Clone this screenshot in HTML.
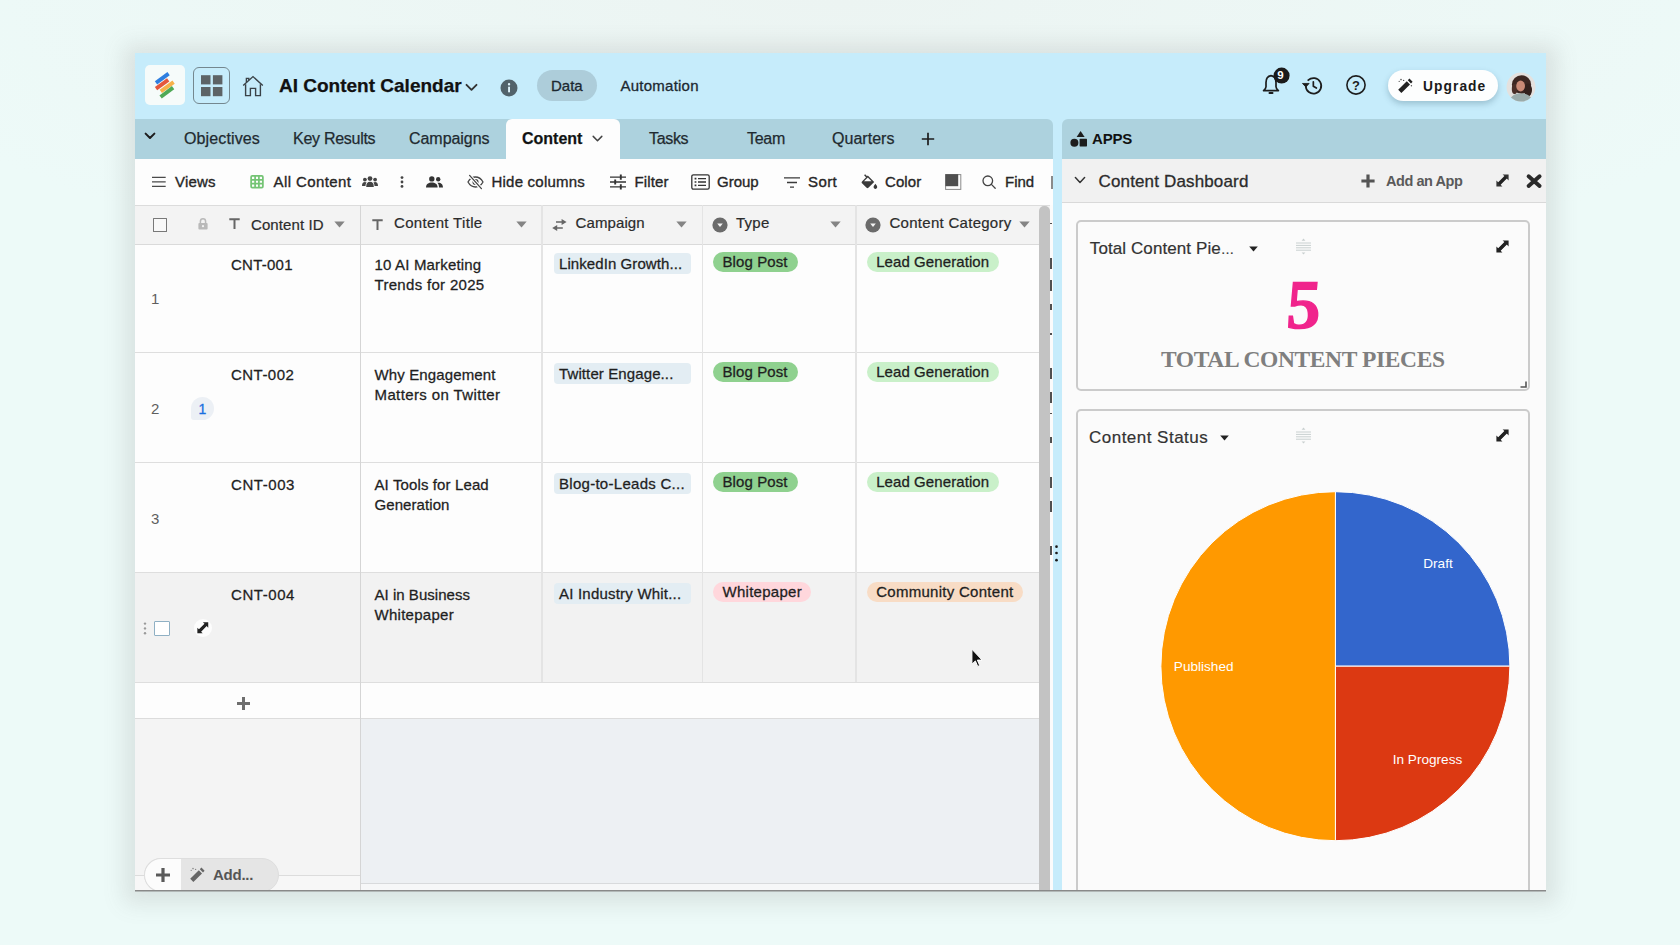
<!DOCTYPE html>
<html lang="en">
<head>
<meta charset="utf-8">
<title>AI Content Calendar</title>
<style>
*{box-sizing:border-box;margin:0;padding:0}
html,body{width:1680px;height:945px;overflow:hidden}
body{font-family:"Liberation Sans",sans-serif;color:#1f1f1f;background:#eefaf8;-webkit-font-smoothing:antialiased}
#stage{position:relative;width:1680px;height:945px;overflow:hidden;
 background:radial-gradient(ellipse 1000px 300px at 50% 0%,#ecf4f2 0%,rgba(237,250,248,0) 100%),#edfaf8}
.abs{position:absolute}
#win{position:absolute;left:135px;top:53px;width:1410.5px;height:837px;background:#c6ecfb;
 box-shadow:0 3px 20px 11px rgba(105,110,110,.15),0 1.5px 0 0 #8e8e8e}
#clip{position:absolute;left:0;top:0;width:1545.5px;height:890px;overflow:hidden}
#clip>*{position:absolute}
.t{position:absolute;white-space:nowrap;line-height:1}
svg{position:absolute;overflow:visible}
.tab{top:130.9px;font-size:16px;color:#1f2a30}
.tb{top:173.8px;font-size:15px;color:#262626;-webkit-text-stroke:.35px #262626}
.tab{-webkit-text-stroke:.25px #1f2a30}
.hd{top:216.5px;font-size:15px;color:#2b2b2b;-webkit-text-stroke:.2px #2b2b2b}
.cell{font-size:15px;color:#1f1f1f;-webkit-text-stroke:.28px #1f1f1f}
.ml{white-space:normal;line-height:20.5px}
.rn{font-size:15px;color:#5f5f5f}
.chip{position:absolute;height:24px;border-radius:4px;background:#e3edf3}
.tag{position:absolute;height:21px;border-radius:11px}
.hline{position:absolute;height:1.5px;background:#dedede}
.vline{position:absolute;width:1.5px;background:#e4e4e4}
.card{position:absolute;left:1076px;width:454px;border:2px solid #cbcbcb;border-radius:5px;background:#fbfbfb}
.ct{font-size:17px;color:#333;top:239px;-webkit-text-stroke:.2px #333}
.pl{font-size:13.6px;fill:#fff;font-family:"Liberation Sans",sans-serif}
</style>
</head>
<body>
<div id="stage">
<div id="win"></div>
<div id="clip">
<!--HEADER-->
<div id="logo" style="left:145px;top:65px;width:39.5px;height:40px;border-radius:5px;background:#f6fbfa"></div>
<svg style="left:145px;top:65px" width="40" height="40" viewBox="0 0 40 40">
 <g stroke-width="3.9" stroke-linecap="butt">
  <line x1="11" y1="17.9" x2="23.6" y2="8.6" stroke="#2f7fe0"/>
  <line x1="11" y1="23.6" x2="23.2" y2="14.9" stroke="#e4573d"/>
  <line x1="15.8" y1="26.4" x2="28.6" y2="17.2" stroke="#f6b14a"/>
  <line x1="15.6" y1="32" x2="28.1" y2="22.6" stroke="#4fa956"/>
 </g>
</svg>
<div id="gridbtn" style="left:193px;top:67px;width:37px;height:37px;border-radius:6px;border:1.5px solid #74878f"></div>
<svg style="left:193px;top:67px" width="37" height="37" viewBox="0 0 37 37" fill="#5d6366">
 <rect x="8" y="8.2" width="9.5" height="9.2"/><rect x="19.9" y="8.2" width="9.5" height="9.2"/>
 <rect x="8" y="20" width="9.5" height="9.2"/><rect x="19.9" y="20" width="9.5" height="9.2"/>
</svg>
<svg style="left:242px;top:75px" width="22" height="22" viewBox="0 0 22 22" fill="none" stroke="#3a4247" stroke-width="1.4" stroke-linejoin="miter">
 <path d="M1.2 10.6 L11 1.6 L20.8 10.6"/>
 <path d="M3.6 9.2 V20.6 H8.4 V13.4 H13.6 V20.6 H18.4 V9.2"/>
 <path d="M4.4 7.2 V3.4 H6.8 V5.2"/>
</svg>
<span class="t" id="title" style="left:279px;top:75.9px;font-size:19px;font-weight:700;color:#111;letter-spacing:0;-webkit-text-stroke:.25px #111">AI Content Calendar</span>
<svg style="left:465px;top:83px" width="13" height="9" viewBox="0 0 13 9" fill="none" stroke="#333" stroke-width="1.9" stroke-linecap="round" stroke-linejoin="round"><path d="M1.5 1.8 L6.5 6.8 L11.5 1.8"/></svg>
<svg style="left:499.8px;top:79px" width="18" height="18" viewBox="0 0 18 18"><circle cx="9" cy="9" r="8.5" fill="#52626a"/><rect x="8.1" y="7.7" width="1.9" height="5.6" fill="#dff3fb"/><circle cx="9.05" cy="5.2" r="1.2" fill="#dff3fb"/></svg>
<div id="datapill" style="left:537px;top:70px;width:60px;height:31px;border-radius:16px;background:#adcdda"></div>
<span class="t" style="left:551px;top:78px;font-size:15px;color:#1c2830;-webkit-text-stroke:.3px #1c2830">Data</span>
<span class="t" style="left:620.5px;top:78px;font-size:15px;color:#1c2830;letter-spacing:.24px;-webkit-text-stroke:.3px #1c2830">Automation</span>
<!-- bell -->
<svg style="left:1260px;top:72px" width="32" height="26" viewBox="0 0 32 26">
 <path d="M11 3.6 C7.6 4.2 6 7 6 10.4 V14.8 C6 16.4 5 17.4 3.6 18.6 H18.4 C17 17.4 16 16.4 16 14.8 V10.4 C16 7 14.4 4.2 11 3.6 Z" fill="none" stroke="#1d1d1d" stroke-width="1.7" stroke-linejoin="round"/>
 <path d="M9.4 21 H12.6" stroke="#1d1d1d" stroke-width="1.8" stroke-linecap="round"/>
 <circle cx="21.6" cy="3.6" r="8" fill="#1b1b1b"/>
</svg>
<span class="t" style="left:1277.2px;top:70px;font-size:11.5px;font-weight:700;color:#fff">9</span>
<!-- history -->
<svg style="left:1302px;top:75.5px" width="21.6" height="19.8" viewBox="0 0 24 22" fill="none" stroke="#1d1d1d" stroke-width="1.9" stroke-linecap="round" stroke-linejoin="round">
 <path d="M4.2 11 A8.6 8.6 0 1 0 6.9 4.7"/>
 <path d="M12.6 6.4 V11.4 L16 13.4"/>
 <path d="M0.8 8.6 L4.3 12.2 L7.6 8.6 Z" fill="#1d1d1d" stroke-width="1"/>
</svg>
<!-- help -->
<svg style="left:1345px;top:74.4px" width="22" height="22" viewBox="0 0 22 22"><circle cx="11" cy="11" r="9.1" fill="none" stroke="#1d1d1d" stroke-width="1.6"/></svg>
<span class="t" style="left:1352px;top:78.9px;font-size:13px;font-weight:700;color:#1d1d1d">?</span>
<!-- upgrade -->
<div id="upgrade" style="left:1388px;top:70px;width:110px;height:31px;border-radius:16px;background:#fdfefe;box-shadow:0 3px 6px rgba(40,80,100,.28)"></div>
<svg style="left:1397px;top:77px" width="17" height="17" viewBox="0 0 17 17">
 <path d="M1.2 12.8 L9.8 4.2 L13 7.4 L4.4 16 Z" fill="#222"/>
 <path d="M10.8 3.2 L12.4 1.6 L15.6 4.8 L14 6.4 Z" fill="#222"/>
 <circle cx="4" cy="2.6" r=".8" fill="#555"/><circle cx="6.6" cy="3.4" r=".7" fill="#555"/><circle cx="2.2" cy="4.4" r=".6" fill="#555"/><circle cx="14.4" cy="8.8" r=".7" fill="#555"/>
</svg>
<span class="t" id="upg" style="left:1423px;top:79.9px;font-size:13.8px;font-weight:700;color:#1b1b1b;letter-spacing:1.05px">Upgrade</span>
<!-- avatar -->
<svg style="left:1506px;top:72px" width="30" height="30" viewBox="0 0 30 30">
 <defs><clipPath id="avc"><circle cx="15" cy="15" r="14.5"/></clipPath></defs>
 <g clip-path="url(#avc)">
  <rect width="30" height="30" fill="#e4e1de"/>
  <ellipse cx="15.5" cy="12.5" rx="9.6" ry="9.2" fill="#3c2722"/>
  <ellipse cx="22" cy="18" rx="4" ry="6.5" fill="#33211d"/>
  <ellipse cx="8.6" cy="17" rx="2.8" ry="5" fill="#4a2f28"/>
  <ellipse cx="14.6" cy="14" rx="4.4" ry="5.4" fill="#c98a76"/>
  <path d="M3 30 C5 23 10 21.2 15 21.6 C21 21.2 25 23.4 27 30 Z" fill="#9aabaa"/>
 </g>
</svg>
<!--TABS-->
<div id="tabbar" style="left:135px;top:119px;width:917.7px;height:40px;background:#add2de;border-radius:0 6px 0 0"></div>
<div id="appsbar" style="left:1062px;top:119px;width:484px;height:40px;background:#add2de;border-radius:6px 0 0 0"></div>
<svg style="left:144px;top:132px" width="12" height="9" viewBox="0 0 12 9" fill="none" stroke="#1d1d1d" stroke-width="2" stroke-linecap="round" stroke-linejoin="round"><path d="M1.6 1.6 L6 6 L10.4 1.6"/></svg>
<span class="t tab" style="left:184px;letter-spacing:0.13px">Objectives</span>
<span class="t tab" style="left:293px;letter-spacing:-0.28px">Key Results</span>
<span class="t tab" style="left:409px;letter-spacing:-0.05px">Campaigns</span>
<div id="activetab" style="left:506px;top:119px;width:114px;height:41px;background:#fdfdfd;border-radius:6px 6px 0 0"></div>
<span class="t tab" style="left:522px;font-weight:700;color:#111">Content</span>
<svg style="left:592px;top:135px" width="11" height="8" viewBox="0 0 11 8" fill="none" stroke="#444" stroke-width="1.5" stroke-linecap="round" stroke-linejoin="round"><path d="M1.2 1.4 L5.5 5.7 L9.8 1.4"/></svg>
<span class="t tab" style="left:649px;letter-spacing:-0.33px">Tasks</span>
<span class="t tab" style="left:747px;letter-spacing:-0.28px">Team</span>
<span class="t tab" style="left:832px;letter-spacing:0.03px">Quarters</span>
<svg style="left:921px;top:132px" width="14" height="14" viewBox="0 0 14 14" stroke="#1d1d1d" stroke-width="1.7" stroke-linecap="butt"><path d="M7 .8 V13.2 M.8 7 H13.2"/></svg>
<svg style="left:1070px;top:130px" width="18" height="18" viewBox="0 0 18 18" fill="#1d1d1d"><path d="M10.6 1 L14.6 7 H6.6 Z"/><circle cx="4.4" cy="12.8" r="4"/><rect x="9.6" y="8.8" width="7.4" height="7.6" rx=".6"/></svg>
<span class="t" style="left:1092px;top:131.3px;font-size:15px;font-weight:700;color:#111;letter-spacing:-.2px">APPS</span>
<!--TOOLBAR-->
<div id="toolbar" style="left:135px;top:159px;width:917.7px;height:46px;background:#fdfdfd"></div>
<svg style="left:152px;top:176.1px" width="13.7" height="12" viewBox="0 0 13.7 12" stroke="#4a4a4a" stroke-width="1.3"><path d="M0 1.4 H13.7 M0 5.9 H13.7 M0 10.4 H13.7"/></svg>
<span class="t tb" style="left:175px;letter-spacing:0.2px">Views</span>
<svg style="left:250px;top:175px" width="14" height="13.6" viewBox="0 0 15 15" fill="none" stroke="#74c474" stroke-width="1.9"><rect x="1" y="1" width="13" height="13" rx="1.2"/><path d="M5.4 1 V14 M9.6 1 V14 M1 5.4 H14 M1 9.6 H14"/></svg>
<span class="t tb" style="left:273.5px;letter-spacing:0.4px">All Content</span>
<svg style="left:362px;top:176px" width="16" height="12" viewBox="0 0 16 12" fill="#444"><circle cx="8" cy="2.6" r="2.4"/><path d="M4.2 11 C4.2 7.4 5.6 5.8 8 5.8 C10.4 5.8 11.8 7.4 11.8 11 Z"/><circle cx="2.9" cy="3.6" r="1.9"/><path d="M0 10 C0 7.2 1 6 2.9 6 C3.6 6 4.2 6.2 4.6 6.6 C3.8 7.6 3.5 8.8 3.5 10 Z"/><circle cx="13.1" cy="3.6" r="1.9"/><path d="M16 10 C16 7.2 15 6 13.1 6 C12.4 6 11.8 6.2 11.4 6.6 C12.2 7.6 12.5 8.8 12.5 10 Z"/></svg>
<svg style="left:400.2px;top:176px" width="4" height="14" viewBox="0 0 4 14" fill="#444"><circle cx="2" cy="1.6" r="1.4"/><circle cx="2" cy="6" r="1.4"/><circle cx="2" cy="10.4" r="1.4"/></svg>
<svg style="left:426px;top:176px" width="17" height="12" viewBox="0 0 17 12" fill="#333"><circle cx="5.8" cy="2.9" r="2.7"/><path d="M0 11.6 C0 8 2.6 6.6 5.8 6.6 C9 6.6 11.6 8 11.6 11.6 Z"/><circle cx="12.2" cy="3.2" r="2.2"/><path d="M12.6 6.7 C15 6.8 17 8 17 11.6 H13 C13 9.6 12.6 8 11.4 6.8 Z"/></svg>
<svg style="left:467px;top:174px" width="17" height="16" viewBox="0 0 17 16" fill="none" stroke="#444" stroke-width="1.3" stroke-linecap="round"><path d="M1 8 C3 4.4 5.6 3 8.5 3 C11.4 3 14 4.4 16 8 C14 11.6 11.4 13 8.5 13 C5.6 13 3 11.6 1 8 Z"/><circle cx="8.5" cy="8" r="2.4"/><path d="M2.2 1.2 L14.6 15" stroke="#fdfdfd" stroke-width="3.4"/><path d="M2.6 1.4 L14.4 14.6"/></svg>
<span class="t tb" style="left:491.5px;letter-spacing:0.22px">Hide columns</span>
<svg style="left:610px;top:174px" width="16" height="16" viewBox="0 0 16 16" fill="none" stroke="#333" stroke-width="1.3"><path d="M0 3.2 H16 M0 8 H16 M0 12.8 H16"/><path d="M10.8 .6 V5.8 M5.2 5.4 V10.6 M10.8 10.2 V15.4" stroke-width="1.9"/></svg>
<span class="t tb" style="left:634.5px;letter-spacing:0.15px">Filter</span>
<svg style="left:691px;top:174px" width="19" height="16" viewBox="0 0 19 16" fill="none" stroke="#333" stroke-width="1.3"><rect x=".8" y=".8" width="17.4" height="14.4" rx="1.6"/><path d="M7 4.6 H15 M7 8 H15 M7 11.4 H15" stroke-width="1.4"/><path d="M3.6 4.6 H5.4 M3.6 8 H5.4 M3.6 11.4 H5.4" stroke-width="1.6"/></svg>
<span class="t tb" style="left:717px">Group</span>
<svg style="left:784px;top:176.5px" width="16" height="11" viewBox="0 0 16 11" stroke="#3a3a3a" stroke-width="1.4" fill="none"><path d="M0 .9 H16 M3 5.5 H13 M6 10.1 H10"/></svg>
<span class="t tb" style="left:808px;letter-spacing:0.4px">Sort</span>
<svg style="left:861px;top:174px" width="17" height="16" viewBox="0 0 17 16" fill="#3a3a3a"><path d="M6.8 1.6 L13.2 8 L7.4 13.8 C6.9 14.3 6.1 14.3 5.6 13.8 L1 9.2 C.5 8.7 .5 7.9 1 7.4 Z"/><path d="M3.6 .8 L8 5.2" stroke="#3a3a3a" stroke-width="1.5" fill="none"/><path d="M6.8 3.4 L3 7.2 H10.6 Z" fill="#fdfdfd"/><path d="M14.4 9.8 C15.4 11.2 16.2 12.2 16.2 13.1 C16.2 14.1 15.4 14.9 14.4 14.9 C13.4 14.9 12.6 14.1 12.6 13.1 C12.6 12.2 13.4 11.2 14.4 9.8 Z"/></svg>
<span class="t tb" style="left:885px;letter-spacing:0.1px">Color</span>
<svg style="left:945px;top:174px" width="17" height="16" viewBox="0 0 17 16"><rect x=".6" y=".6" width="15.2" height="14.8" fill="#fdfdfd" stroke="#8a8a8a" stroke-width="1"/><rect x=".4" y=".2" width="12.8" height="12" fill="#4f4f4f"/></svg>
<svg style="left:982px;top:175px" width="14" height="14" viewBox="0 0 14 14" fill="none" stroke="#444" stroke-width="1.3" stroke-linecap="round"><circle cx="5.8" cy="5.8" r="4.8"/><path d="M9.4 9.4 L13.2 13.2"/></svg>
<span class="t tb" style="left:1005px">Find</span>
<div style="left:1051px;top:176px;width:1.7px;height:12.7px;background:#8a8a8a"></div>
<!--GRID-->
<div id="gridbg" style="left:135px;top:205px;width:917.7px;height:685px;background:#fdfdfd"></div>
<div id="colhead" style="left:135px;top:205px;width:917.7px;height:39px;background:#f3f3f3"></div>
<div id="hoverrow" style="left:135px;top:572px;width:904px;height:110px;background:#f2f2f2"></div>
<div id="emptyleft" style="left:135px;top:719px;width:226px;height:156px;background:#f4f4f4"></div>
<div id="leftfoot" style="left:135px;top:875px;width:226px;height:16px;background:#f7f7f7"></div>
<div id="emptyright" style="left:361px;top:719px;width:691px;height:164px;background:#edf0f3"></div>
<div id="hscroll" style="left:361px;top:883px;width:691px;height:8px;background:#f6f7f8"></div>
<div class="hline" style="left:135px;top:204.5px;width:917.7px;background:#dcdcdc"></div>
<div class="hline" style="left:135px;top:243.5px;width:917.7px;background:#dadada"></div>
<div class="hline" style="left:135px;top:351.5px;width:904px"></div>
<div class="hline" style="left:135px;top:461.5px;width:904px"></div>
<div class="hline" style="left:135px;top:571.5px;width:904px"></div>
<div class="hline" style="left:135px;top:681.5px;width:904px"></div>
<div class="hline" style="left:135px;top:717.5px;width:917.7px;background:#dcdcdc"></div>
<div class="hline" style="left:135px;top:874.5px;width:226px;height:1px;background:#dcdcdc"></div>
<div class="hline" style="left:361px;top:882.5px;width:691px;height:1px;background:#d8dadc"></div>
<div class="vline" style="left:359.7px;top:205px;height:685px;width:1.8px;background:#d5d5d5"></div>
<div class="vline" style="left:541px;top:205px;height:477px"></div>
<div class="vline" style="left:701.5px;top:205px;height:477px"></div>
<div class="vline" style="left:855px;top:205px;height:477px"></div>
<!-- column header -->
<div style="left:153px;top:218px;width:14px;height:14px;border:1px solid #787878;border-radius:.5px;background:#f8f8f8"></div>
<svg style="left:198px;top:218px" width="10" height="12" viewBox="0 0 10 12"><rect x=".4" y="5" width="9.2" height="6.6" rx="1" fill="#b9b9b9"/><circle cx="5" cy="8.2" r="1.1" fill="#f3f3f3"/><path d="M2.4 5 V3.4 A2.6 2.6 0 0 1 7.6 3.4 V5" fill="none" stroke="#b9b9b9" stroke-width="1.5"/></svg>
<svg style="left:229px;top:218px" width="11" height="11" viewBox="0 0 11 11" fill="#666"><path d="M.3 .3 H10.7 V2.2 H6.5 V10.9 H4.5 V2.2 H.3 Z"/></svg>
<span class="t hd" style="left:251px;top:216.5px;letter-spacing:0.1px">Content ID</span>
<svg class="tri" style="left:334px;top:221px" width="11" height="7" viewBox="0 0 11 7" fill="#848484"><path d="M.3 .5 H10.7 L5.5 6.4 Z"/></svg>
<svg style="left:372px;top:219px" width="11" height="11" viewBox="0 0 11 11" fill="#666"><path d="M.3 .3 H10.7 V2.2 H6.5 V10.9 H4.5 V2.2 H.3 Z"/></svg>
<span class="t hd" style="left:394px;top:214.5px;letter-spacing:0.33px">Content Title</span>
<svg class="tri" style="left:516px;top:221px" width="11" height="7" viewBox="0 0 11 7" fill="#848484"><path d="M.3 .5 H10.7 L5.5 6.4 Z"/></svg>
<svg style="left:552px;top:218.6px" width="15" height="12" viewBox="0 0 15 12" fill="#666"><path d="M9.6 0 L14.6 3 L9.6 6 V3.8 H4 V2.2 H9.6 Z"/><path d="M5.2 6 L.2 9 L5.2 12 V9.8 H10.8 V8.2 H5.2 Z"/></svg>
<span class="t hd" style="left:575.5px;top:214.5px;letter-spacing:0.11px">Campaign</span>
<svg class="tri" style="left:676px;top:221px" width="11" height="7" viewBox="0 0 11 7" fill="#848484"><path d="M.3 .5 H10.7 L5.5 6.4 Z"/></svg>
<svg style="left:712px;top:217px" width="16" height="16" viewBox="0 0 16 16"><circle cx="8" cy="8" r="7.6" fill="#6b6b6b"/><path d="M5.2 6.6 H10.8 L8 9.9 Z" fill="#f3f3f3"/></svg>
<span class="t hd" style="left:736px;top:214.5px;letter-spacing:0.24px">Type</span>
<svg class="tri" style="left:829.5px;top:221px" width="11" height="7" viewBox="0 0 11 7" fill="#848484"><path d="M.3 .5 H10.7 L5.5 6.4 Z"/></svg>
<svg style="left:865px;top:217px" width="16" height="16" viewBox="0 0 16 16"><circle cx="8" cy="8" r="7.6" fill="#6b6b6b"/><path d="M5.2 6.6 H10.8 L8 9.9 Z" fill="#f3f3f3"/></svg>
<span class="t hd" style="left:889.5px;top:214.5px;letter-spacing:0.28px">Content Category</span>
<svg class="tri" style="left:1019px;top:221px" width="11" height="7" viewBox="0 0 11 7" fill="#848484"><path d="M.3 .5 H10.7 L5.5 6.4 Z"/></svg>
<!-- row 1 -->
<span class="t rn" style="left:151px;top:291.0px">1</span>
<span class="t cell" style="left:231px;top:256.8px;letter-spacing:0.25px">CNT-001</span>
<span class="t cell" style="left:374.5px;top:256.8px;letter-spacing:0.17px">10 AI Marketing</span>
<span class="t cell" style="left:374.5px;top:277.1px;letter-spacing:0.31px">Trends for 2025</span>
<div class="chip" style="left:554px;top:253.29999999999998px;width:137px;height:21px"></div>
<span class="t cell" style="left:559px;top:256.1px;letter-spacing:0.08px">LinkedIn Growth...</span>
<div class="tag" style="left:712.7px;top:251.7px;width:85px;height:20px;background:#8fd18f"></div>
<span class="t cell" style="left:722.5px;top:254.0px;letter-spacing:0.09px">Blog Post</span>
<div class="tag" style="left:866.5px;top:251.7px;width:132px;height:20px;background:#c9f0c9"></div>
<span class="t cell" style="left:876.2px;top:254.0px;letter-spacing:0.08px">Lead Generation</span>
<!-- row 2 -->
<span class="t rn" style="left:151px;top:401.0px">2</span>
<div style="left:191px;top:397px;width:23px;height:23px;border-radius:11.5px 11.5px 11.5px 3px;background:#ecf0f5"></div>
<span class="t" style="left:198.5px;top:401.5px;font-size:14px;color:#1a6fe0;-webkit-text-stroke:.3px #1a6fe0">1</span>
<span class="t cell" style="left:231px;top:366.8px;letter-spacing:0.46px">CNT-002</span>
<span class="t cell" style="left:374.5px;top:366.8px;letter-spacing:0.13px">Why Engagement</span>
<span class="t cell" style="left:374.5px;top:387.1px;letter-spacing:0.39px">Matters on Twitter</span>
<div class="chip" style="left:554px;top:363.3px;width:137px;height:21px"></div>
<span class="t cell" style="left:559px;top:366.1px;letter-spacing:0.11px">Twitter Engage...</span>
<div class="tag" style="left:712.7px;top:361.7px;width:85px;height:20px;background:#8fd18f"></div>
<span class="t cell" style="left:722.5px;top:364.0px;letter-spacing:0.09px">Blog Post</span>
<div class="tag" style="left:866.5px;top:361.7px;width:132px;height:20px;background:#c9f0c9"></div>
<span class="t cell" style="left:876.2px;top:364.0px;letter-spacing:0.08px">Lead Generation</span>
<!-- row 3 -->
<span class="t rn" style="left:151px;top:511.0px">3</span>
<span class="t cell" style="left:231px;top:476.8px;letter-spacing:0.57px">CNT-003</span>
<span class="t cell" style="left:374.5px;top:476.8px;letter-spacing:0.12px">AI Tools for Lead</span>
<span class="t cell" style="left:374.5px;top:497.1px;letter-spacing:0.08px">Generation</span>
<div class="chip" style="left:554px;top:473.3px;width:137px;height:21px"></div>
<span class="t cell" style="left:559px;top:476.1px;letter-spacing:0.28px">Blog-to-Leads C...</span>
<div class="tag" style="left:712.7px;top:471.7px;width:85px;height:20px;background:#8fd18f"></div>
<span class="t cell" style="left:722.5px;top:474.0px;letter-spacing:0.09px">Blog Post</span>
<div class="tag" style="left:866.5px;top:471.7px;width:132px;height:20px;background:#c9f0c9"></div>
<span class="t cell" style="left:876.2px;top:474.0px;letter-spacing:0.08px">Lead Generation</span>
<!-- row 4 -->
<span class="t cell" style="left:231px;top:586.8px;letter-spacing:0.57px">CNT-004</span>
<span class="t cell" style="left:374.5px;top:586.8px;letter-spacing:0.03px">AI in Business</span>
<span class="t cell" style="left:374.5px;top:607.0999999999999px;letter-spacing:0.28px">Whitepaper</span>
<div class="chip" style="left:554px;top:583.3000000000001px;width:137px;height:21px"></div>
<span class="t cell" style="left:559px;top:586.1px;letter-spacing:0.21px">AI Industry Whit...</span>
<div class="tag" style="left:712.7px;top:581.7px;width:98px;height:20px;background:#ffd7dc"></div>
<span class="t cell" style="left:722.5px;top:584.0px;letter-spacing:0.28px">Whitepaper</span>
<div class="tag" style="left:866.5px;top:581.7px;width:156.6px;height:20px;background:#f8dcc5"></div>
<span class="t cell" style="left:876.2px;top:584.0px;letter-spacing:0.28px">Community Content</span>
<!-- row 4 controls -->
<svg style="left:143px;top:622px" width="4" height="13" viewBox="0 0 4 13" fill="#9a9a9a"><circle cx="2" cy="1.6" r="1.2"/><circle cx="2" cy="6.4" r="1.2"/><circle cx="2" cy="11.2" r="1.2"/></svg>
<div style="left:154px;top:620.5px;width:16px;height:15.5px;border:1.2px solid #8fb0c4;border-radius:1px;background:#fff"></div>
<div style="left:193.5px;top:619px;width:18px;height:18px;border-radius:9px;background:#fdfdfd"></div>
<svg style="left:196.7px;top:622.3px" width="11.6" height="11.6" viewBox="0 0 13 13" fill="#222"><path d="M6.6 .4 H12.6 V6.4 L10.8 4.6 L4.6 10.8 L6.4 12.6 H.4 V6.4 L2.2 8.2 L8.4 2 Z"/><path d="M3 10 L10 3" stroke="#222" stroke-width="2.5" fill="none"/></svg>
<!-- add row -->
<svg style="left:237px;top:697px" width="13" height="13" viewBox="0 0 13 13" stroke="#6e6e6e" stroke-width="3"><path d="M6.5 0 V13 M0 6.5 H13"/></svg>
<!-- scrollbar -->
<div id="vscroll" style="left:1039px;top:206px;width:10.5px;height:690px;border-radius:5px;background:#c3c3c3"></div>
<!-- clipped next-column slivers -->
<div id="sliver" style="left:1049.5px;top:205px;width:3.2px;height:685px;background:#fbfbfb"></div>
<div style="left:1050.2px;top:222.5px;width:1.4px;height:1.5px;background:#505050"></div>
<div style="left:1050.2px;top:258px;width:1.4px;height:11px;background:#505050"></div>
<div style="left:1050.2px;top:280px;width:1.4px;height:11px;background:#505050"></div>
<div style="left:1050.2px;top:304px;width:1.4px;height:6px;background:#505050"></div>
<div style="left:1050.2px;top:333px;width:1.4px;height:1.8px;background:#505050"></div>
<div style="left:1050.2px;top:368px;width:1.4px;height:11px;background:#505050"></div>
<div style="left:1050.2px;top:392px;width:1.4px;height:11px;background:#505050"></div>
<div style="left:1050.2px;top:412.5px;width:1.4px;height:1.5px;background:#505050"></div>
<div style="left:1050.2px;top:437px;width:1.4px;height:6px;background:#505050"></div>
<div style="left:1050.2px;top:477px;width:1.4px;height:11px;background:#505050"></div>
<div style="left:1050.2px;top:501px;width:1.4px;height:11px;background:#505050"></div>
<div style="left:1050.2px;top:546px;width:1.4px;height:9px;background:#505050"></div>
<!-- panel resize dots -->
<svg style="left:1055.4px;top:545px" width="3" height="17" viewBox="0 0 3 17" fill="#1a1a1a"><circle cx="1.5" cy="1.7" r="1.35"/><circle cx="1.5" cy="8" r="1.35"/><circle cx="1.5" cy="15.2" r="1.35"/></svg>
<!-- mouse cursor -->
<svg id="cursor" style="left:970.6px;top:648.2px" width="12" height="20" viewBox="-1 -1 13.2 21.4"><path d="M0 0 L0 16.5 L3.8 12.9 L6.4 19 L8.6 18 L6 12 L11.2 12 Z" fill="#111" stroke="#fff" stroke-width="1.1" stroke-linejoin="round"/></svg>
<!-- add pill -->
<div style="left:144px;top:858px;width:135px;height:34px;border-radius:17px;background:#e5e5e5;border:1px solid #dedede"></div>
<div style="left:144px;top:858px;width:37px;height:34px;border-radius:17px 0 0 17px;background:#fcfcfc;border:1px solid #dedede;border-right:none"></div>
<svg style="left:155.5px;top:868px" width="14" height="14" viewBox="0 0 14 14" stroke="#5a5a5a" stroke-width="3.2"><path d="M7 0 V14 M0 7 H14"/></svg>
<svg style="left:189px;top:866px" width="17" height="17" viewBox="0 0 17 17">
 <path d="M1.2 12.8 L9.8 4.2 L13 7.4 L4.4 16 Z" fill="#666"/>
 <path d="M10.8 3.2 L12.4 1.6 L15.6 4.8 L14 6.4 Z" fill="#666"/>
 <circle cx="4" cy="2.6" r=".8" fill="#888"/><circle cx="6.6" cy="3.4" r=".7" fill="#888"/><circle cx="2.2" cy="4.4" r=".6" fill="#888"/>
</svg>
<span class="t" style="left:213px;top:867px;font-size:15px;font-weight:700;color:#555;letter-spacing:-.25px">Add...</span>
<!--APPS-->
<div id="appsbg" style="left:1062px;top:159px;width:484px;height:731px;background:#fbfbfb"></div>
<div id="appshead" style="left:1062px;top:159px;width:484px;height:44px;background:#f1f1f1;border-bottom:1.5px solid #d9d9d9"></div>
<svg style="left:1074px;top:176px" width="12" height="9" viewBox="0 0 12 9" fill="none" stroke="#333" stroke-width="1.5" stroke-linecap="round" stroke-linejoin="round"><path d="M1.4 1.6 L6 6.4 L10.6 1.6"/></svg>
<span class="t" style="left:1098.5px;top:172.5px;font-size:17px;color:#2b2b2b;-webkit-text-stroke:.3px #2b2b2b;letter-spacing:0.15px">Content Dashboard</span>
<svg style="left:1360.5px;top:174px" width="14" height="14" viewBox="0 0 14 14" stroke="#555" stroke-width="3.2"><path d="M7 .4 V13.6 M.4 7 H13.6"/></svg>
<span class="t" style="left:1386px;top:173.5px;font-size:14.5px;font-weight:700;color:#5a5a5a;letter-spacing:-.45px">Add an App</span>
<svg style="left:1496px;top:174px" width="13" height="13" viewBox="0 0 13 13" fill="#333"><path d="M6.6 .4 H12.6 V6.4 L10.8 4.6 L4.6 10.8 L6.4 12.6 H.4 V6.4 L2.2 8.2 L8.4 2 Z"/><path d="M3 10 L10 3" stroke="#222" stroke-width="2.5" fill="none"/></svg>
<svg style="left:1526px;top:173.5px" width="16" height="14" viewBox="0 0 16 14" stroke="#2a2a2a" stroke-width="3.9" stroke-linecap="round"><path d="M2.6 2.2 L13.6 12 M13.6 2.2 L2.6 12"/></svg>
<!-- card 1 -->
<div class="card" id="card1" style="top:219.8px;height:170.8px"></div>
<span class="t ct" style="left:1089.8px;top:239.8px;letter-spacing:.09px">Total Content Pie<span style="font-size:13.5px">…</span></span>
<svg style="left:1249px;top:246px" width="9" height="6" viewBox="0 0 9 6" fill="#222"><path d="M.2 .4 H8.8 L4.5 5.4 Z"/></svg>
<svg style="left:1295.5px;top:238px" width="15" height="17" viewBox="0 0 15 17" fill="none" stroke="#c9d0d0" stroke-width="1"><path d="M0 5 H15 M0 7.4 H15 M0 9.8 H15 M0 12.2 H15"/><path d="M5.6 2.8 L7.5 .6 L9.4 2.8 Z M5.6 14.4 L7.5 16.6 L9.4 14.4 Z" fill="#c9d0d0" stroke="none"/></svg>
<svg style="left:1495.5px;top:240px" width="13" height="13" viewBox="0 0 13 13" fill="#222"><path d="M6.6 .4 H12.6 V6.4 L10.8 4.6 L4.6 10.8 L6.4 12.6 H.4 V6.4 L2.2 8.2 L8.4 2 Z"/><path d="M3 10 L10 3" stroke="#222" stroke-width="2.5" fill="none"/></svg>
<span class="t" style="left:1285.5px;top:270.3px;font-family:'Liberation Serif',serif;font-weight:700;font-style:italic;font-size:69.5px;color:#f0248c;-webkit-text-stroke:1.4px #f0248c;transform:skewX(5deg)">5</span>
<span class="t" style="left:1161px;top:347.5px;font-family:'Liberation Serif',serif;font-weight:700;font-size:23.5px;color:#7f7f7f;letter-spacing:-.38px">TOTAL CONTENT PIECES</span>
<svg style="left:1520px;top:381px" width="7" height="7" viewBox="0 0 7 7" fill="none" stroke="#555" stroke-width="1.6"><path d="M6 .5 V6 H.5"/></svg>
<!-- card 2 -->
<div class="card" id="card2" style="top:408.6px;height:500px"></div>
<span class="t ct" style="left:1089px;top:428.8px;letter-spacing:0.48px">Content Status</span>
<svg style="left:1219.5px;top:435px" width="9" height="6" viewBox="0 0 9 6" fill="#222"><path d="M.2 .4 H8.8 L4.5 5.4 Z"/></svg>
<svg style="left:1295.5px;top:427px" width="15" height="17" viewBox="0 0 15 17" fill="none" stroke="#c9d0d0" stroke-width="1"><path d="M0 5 H15 M0 7.4 H15 M0 9.8 H15 M0 12.2 H15"/><path d="M5.6 2.8 L7.5 .6 L9.4 2.8 Z M5.6 14.4 L7.5 16.6 L9.4 14.4 Z" fill="#c9d0d0" stroke="none"/></svg>
<svg style="left:1495.5px;top:429px" width="13" height="13" viewBox="0 0 13 13" fill="#222"><path d="M6.6 .4 H12.6 V6.4 L10.8 4.6 L4.6 10.8 L6.4 12.6 H.4 V6.4 L2.2 8.2 L8.4 2 Z"/><path d="M3 10 L10 3" stroke="#222" stroke-width="2.5" fill="none"/></svg>
<svg id="pie" style="left:0;top:0" width="1545" height="890" viewBox="0 0 1545 890">
 <path d="M1335.4 666.2 L1335.4 491.70000000000005 A174.5 174.5 0 0 1 1509.9 666.2 Z" fill="#3366cc" stroke="#fff" stroke-width="1"/>
 <path d="M1335.4 666.2 L1509.9 666.2 A174.5 174.5 0 0 1 1335.4 840.7 Z" fill="#dc3912" stroke="#fff" stroke-width="1"/>
 <path d="M1335.4 666.2 L1335.4 840.7 A174.5 174.5 0 0 1 1335.4 491.70000000000005 Z" fill="#ff9900" stroke="#fff" stroke-width="1"/>
 <text class="pl" x="1438" y="568" text-anchor="middle">Draft</text>
 <text class="pl" x="1427.5" y="763.5" text-anchor="middle">In Progress</text>
 <text class="pl" x="1203.7" y="671" text-anchor="middle">Published</text>
</svg>
</div>
</div>
</body>
</html>
